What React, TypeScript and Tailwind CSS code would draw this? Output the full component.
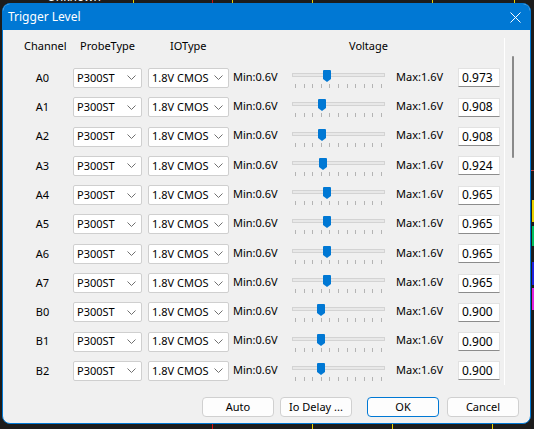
const rows = [
    { ch: "A0", v: 0.973 },
    { ch: "A1", v: 0.908 },
    { ch: "A2", v: 0.908 },
    { ch: "A3", v: 0.924 },
    { ch: "A4", v: 0.965 },
    { ch: "A5", v: 0.965 },
    { ch: "A6", v: 0.965 },
    { ch: "A7", v: 0.965 },
    { ch: "B0", v: 0.9 },
    { ch: "B1", v: 0.9 },
    { ch: "B2", v: 0.9 },
];

function Chevron() {
    return (
        <svg width="9" height="5" viewBox="0 0 9 5" className="shrink-0">
            <path d="M0.5 0.5 L4.5 4.5 L8.5 0.5" fill="none" stroke="#707070" strokeWidth="1" />
        </svg>
    );
}

function Combo({ label, width }: { label: string; width: string }) {
    return (
        <div className={`${width} h-[20px] bg-white border border-[#cfcfcf] rounded-[2px] flex items-center justify-between pl-[3px] pr-[5px]`}>
            <span>{label}</span>
            <Chevron />
        </div>
    );
}

function Slider({ value }: { value: number }) {
    const frac = (value - 0.6) / 1.0;
    // thumb centre sits on the tick scale (3px .. 89px)
    const left = 3.3 + frac * 86 - 4;
    return (
        <div className="relative w-[93px] h-[22px] shrink-0">
            <div className="absolute left-0 right-0 top-[6px] h-[4px] bg-[#e8e8e8] border border-[#d3d3d3]" />
            <div className="absolute left-[3px] w-[87px] top-[17px] h-[4px] flex justify-between">
                {Array.from({ length: 11 }).map((_, i) => (
                    <div key={i} className="w-px h-full bg-[#b4b4b4]" />
                ))}
            </div>
            <svg className="absolute top-[3px]" style={{ left }} width="8" height="12" viewBox="0 0 8 12">
                <path d="M1 0 H7 Q8 0 8 1 V9 L4 12 L0 9 V1 Q0 0 1 0 Z" fill="#0078d4" />
            </svg>
        </div>
    );
}

export default function App() {
    return (
        <div
            className="relative w-[534px] h-[429px] bg-[#1c1c1c] overflow-hidden text-[11px] text-black"
            style={{ fontFamily: '"Segoe UI", "Noto Sans", sans-serif' }}
        >
            {/* scope behind the dialog */}
            <span className="absolute left-[47px] top-[-10px] text-white text-[12px] leading-[14px]">Unknown</span>
            <div className="absolute left-[133px] top-0 w-px h-[4px] bg-[#e6d200]" />
            <div className="absolute left-[212px] top-0 w-px h-[4px] bg-[#d01010]" />
            <div className="absolute left-[232px] top-0 w-px h-[4px] bg-[#e6d200]" />
            <div className="absolute left-[312px] top-0 w-px h-[4px] bg-[#e6d200]" />
            <div className="absolute left-[432px] top-0 w-px h-[4px] bg-[#e6d200]" />
            <div className="absolute left-[514px] top-0 w-px h-[4px] bg-[#e6d200]" />
            <div className="absolute left-[212px] bottom-0 w-px h-[5px] bg-[#d01010]" />
            <div className="absolute left-[312px] bottom-0 w-px h-[5px] bg-[#e6d200]" />
            <div className="absolute left-[392px] bottom-0 w-px h-[5px] bg-[#e6d200]" />
            <div className="absolute left-[492px] bottom-0 w-px h-[5px] bg-[#e6d200]" />
            <div className="absolute right-0 top-[170px] w-[3px] h-px bg-[#c04040]" />
            <div className="absolute right-0 top-[200px] w-[2px] h-[22px] bg-[#e6d200]" />
            <div className="absolute right-0 top-[226px] w-[2px] h-[20px] bg-[#00c060]" />
            <div className="absolute right-0 top-[262px] w-[2px] h-[23px] bg-[#2020e0]" />
            <div className="absolute right-0 top-[288px] w-[2px] h-[22px] bg-[#e020e0]" />

            <div className="relative ml-[2px] mt-[3px] w-[529px] h-[421px] rounded-[8px] border border-[#0078d4] bg-[#f0f0f0] overflow-hidden flex flex-col">
                <div className="h-[26px] shrink-0 bg-[#0078d4] text-white text-[12px] flex items-center justify-between pl-[5px] pr-[9px]">
                    <span>Trigger Level</span>
                    <svg width="11" height="11" viewBox="0 0 11 11">
                        <path d="M0.5 0.5 L10.5 10.5 M10.5 0.5 L0.5 10.5" stroke="white" strokeWidth="1" fill="none" />
                    </svg>
                </div>

                <div className="flex">
                    <div className="mt-[8px] w-[502px] h-[347px] border-r border-white overflow-hidden">
                        <div className="flex h-[16px] items-center pl-[21px]">
                            <span className="w-[56px]">Channel</span>
                            <span className="w-[90px]">ProbeType</span>
                            <span className="w-[179px]">IOType</span>
                            <span>Voltage</span>
                        </div>
                        <div className="mt-[9.35px]">
                            {rows.map((r) => (
                                <div key={r.ch} className="h-[29.3px] flex items-center pl-[9px]">
                                    <span className="w-[61px] text-center">{r.ch}</span>
                                    <Combo label="P300ST" width="w-[69px]" />
                                    <div className="w-[6px]" />
                                    <Combo label="1.8V CMOS" width="w-[81px]" />
                                    <span className="w-[63px] pl-[4px] -mt-[2px]">Min:0.6V</span>
                                    <Slider value={r.v} />
                                    <span className="w-[73px] pl-[11px] -mt-[2px]">Max:1.6V</span>
                                    <div className="w-[42px] h-[19px] bg-white border border-[#e2e2e2] border-b-[#8c8c8c] flex items-center pl-[3px] text-[12px]">
                                        {r.v.toFixed(3)}
                                    </div>
                                </div>
                            ))}
                        </div>
                    </div>
                    <div className="ml-[7px] mt-[26px] w-[2px] h-[102px] bg-[#8a8a8a] rounded-full" />
                </div>

                <div className="mt-[12px] flex pl-[199px]">
                    <button className="w-[72px] h-[20px] bg-[#fdfdfd] border border-[#d0d0d0] rounded-[4px]">Auto</button>
                    <button className="ml-[6px] w-[72px] h-[20px] bg-[#fdfdfd] border border-[#d0d0d0] rounded-[4px]">Io Delay ...</button>
                    <button className="ml-[15px] w-[72px] h-[20px] bg-[#fdfdfd] border border-[#0078d4] rounded-[4px]">OK</button>
                    <button className="ml-[8px] w-[72px] h-[20px] bg-[#fdfdfd] border border-[#d0d0d0] rounded-[4px]">Cancel</button>
                </div>
            </div>
        </div>
    );
}
